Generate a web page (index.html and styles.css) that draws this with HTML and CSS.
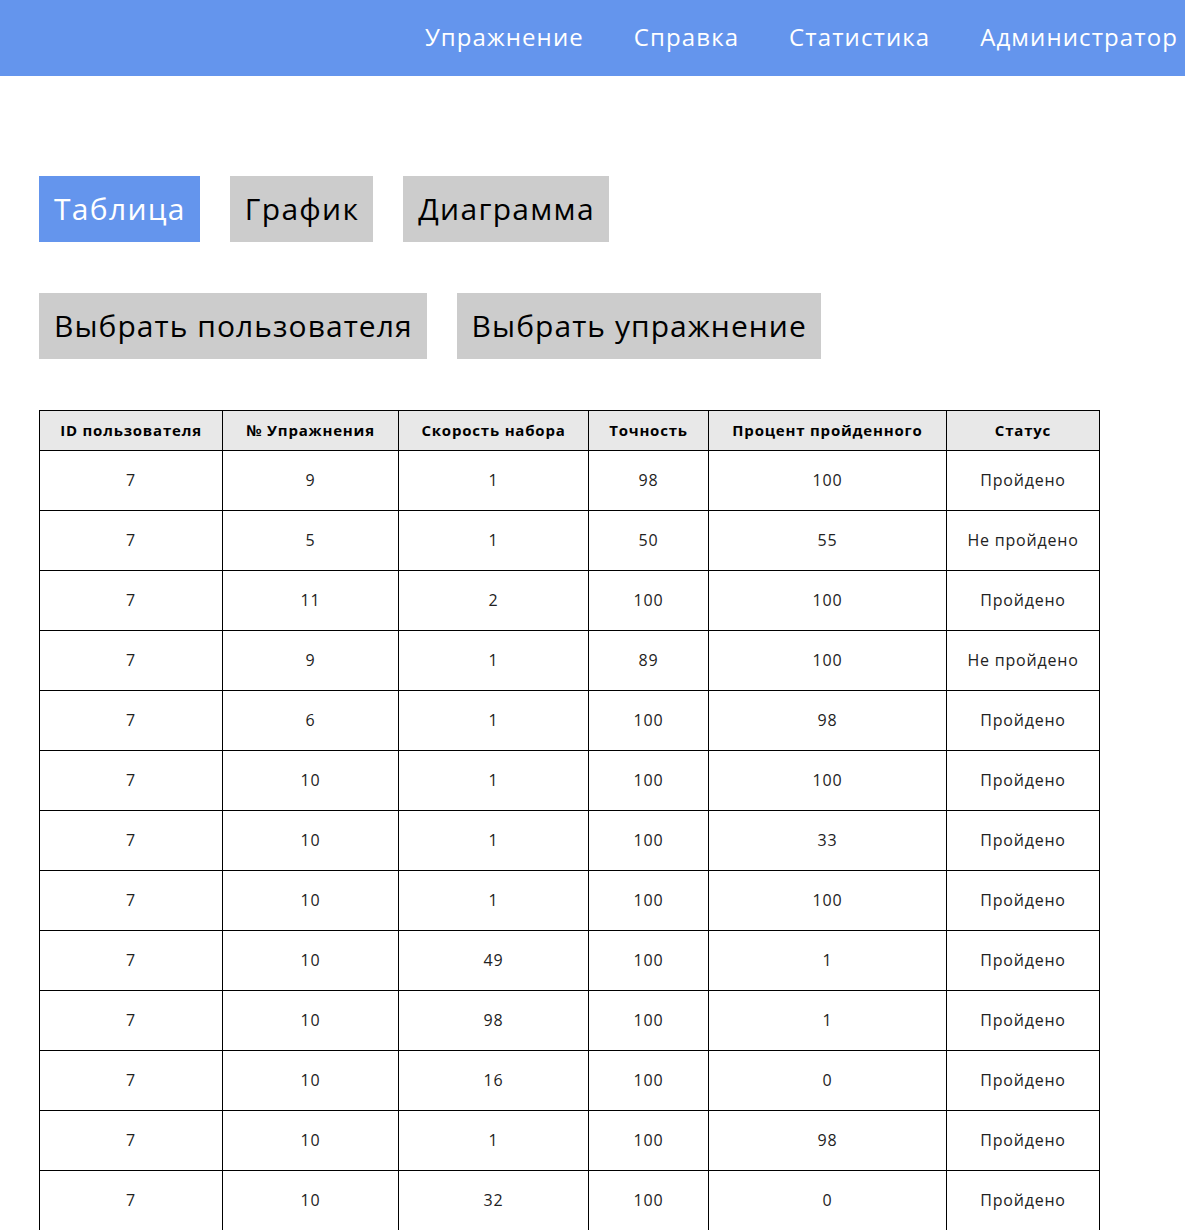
FILE: index.html
```html
<!DOCTYPE html>
<html lang="ru">
<head>
<meta charset="utf-8">
<title>Статистика</title>
<link rel="stylesheet" href="styles.css">
</head>
<body>
<header class="topbar">
  <nav class="nav">
    <a class="nav-item" href="#">Упражнение</a>
    <a class="nav-item" href="#">Справка</a>
    <a class="nav-item" href="#">Статистика</a>
    <a class="nav-item nav-last" href="#">Администратор</a>
  </nav>
</header>
<main class="content">
  <div class="btn-row">
    <button class="btn btn-active">Таблица</button>
    <button class="btn">График</button>
    <button class="btn">Диаграмма</button>
  </div>
  <div class="btn-row btn-row-select">
    <button class="btn">Выбрать пользователя</button>
    <button class="btn">Выбрать упражнение</button>
  </div>
  <table class="stats">
    <colgroup>
      <col class="c1"><col class="c2"><col class="c3"><col class="c4"><col class="c5"><col class="c6">
    </colgroup>
    <thead>
      <tr><th>ID пользователя</th><th>№ Упражнения</th><th>Скорость набора</th><th>Точность</th><th>Процент пройденного</th><th>Статус</th></tr>
    </thead>
    <tbody>
      <tr><td>7</td><td>9</td><td>1</td><td>98</td><td>100</td><td>Пройдено</td></tr>
      <tr><td>7</td><td>5</td><td>1</td><td>50</td><td>55</td><td>Не пройдено</td></tr>
      <tr><td>7</td><td>11</td><td>2</td><td>100</td><td>100</td><td>Пройдено</td></tr>
      <tr><td>7</td><td>9</td><td>1</td><td>89</td><td>100</td><td>Не пройдено</td></tr>
      <tr><td>7</td><td>6</td><td>1</td><td>100</td><td>98</td><td>Пройдено</td></tr>
      <tr><td>7</td><td>10</td><td>1</td><td>100</td><td>100</td><td>Пройдено</td></tr>
      <tr><td>7</td><td>10</td><td>1</td><td>100</td><td>33</td><td>Пройдено</td></tr>
      <tr><td>7</td><td>10</td><td>1</td><td>100</td><td>100</td><td>Пройдено</td></tr>
      <tr><td>7</td><td>10</td><td>49</td><td>100</td><td>1</td><td>Пройдено</td></tr>
      <tr><td>7</td><td>10</td><td>98</td><td>100</td><td>1</td><td>Пройдено</td></tr>
      <tr><td>7</td><td>10</td><td>16</td><td>100</td><td>0</td><td>Пройдено</td></tr>
      <tr><td>7</td><td>10</td><td>1</td><td>100</td><td>98</td><td>Пройдено</td></tr>
      <tr><td>7</td><td>10</td><td>32</td><td>100</td><td>0</td><td>Пройдено</td></tr>
    </tbody>
  </table>
</main>
</body>
</html>
```
FILE: styles.css
```css
* { box-sizing: border-box; }
body {
  margin: 0;
  font-family: "Open Sans", "DejaVu Sans", sans-serif;
  color: #000;
  background: #fff;
  overflow: hidden;
}
.topbar {
  height: 76px;
  background: #6495ed;
}
.nav {
  display: flex;
  justify-content: flex-end;
  height: 100%;
  padding-right: 7px;
}
.nav-item {
  color: #fff;
  text-decoration: none;
  font-size: 24px;
  letter-spacing: 1.1px;
  line-height: 74px;
  padding: 0 25px;
  font-weight: 400;
}
.nav-last { padding-right: 0; }
.content {
  padding: 100px 0 0 39px;
}
.btn-row {
  display: flex;
  gap: 30px;
  margin-bottom: 51px;
}
.btn {
  font-family: inherit;
  font-size: 30px;
  letter-spacing: 1.3px;
  line-height: 36px;
  height: 66px;
  padding: 0 14px 0 15px;
  border: none;
  background: #cccccc;
  color: #000;
  cursor: pointer;
}
.btn-row-select .btn {
  letter-spacing: 1.05px;
}
.btn-active {
  background: #6495ed;
  color: #fff;
}
.stats {
  border-collapse: collapse;
  table-layout: fixed;
  width: 1061px;
}
.c1 { width: 183px; }
.c2 { width: 176px; }
.c3 { width: 190px; }
.c4 { width: 120px; }
.c5 { width: 238px; }
.c6 { width: 153px; }
.stats th, .stats td {
  border: 1px solid #000;
  text-align: center;
  padding: 0;
}
.stats th {
  background: #e8e8e8;
  height: 40px;
  font-weight: 700;
  font-size: 15px;
  letter-spacing: 0.8px;
  padding-bottom: 2px;
}
.stats td {
  height: 60px;
  color: #222;
  font-size: 16px;
  letter-spacing: 0.8px;
  padding-bottom: 2px;
}
```
